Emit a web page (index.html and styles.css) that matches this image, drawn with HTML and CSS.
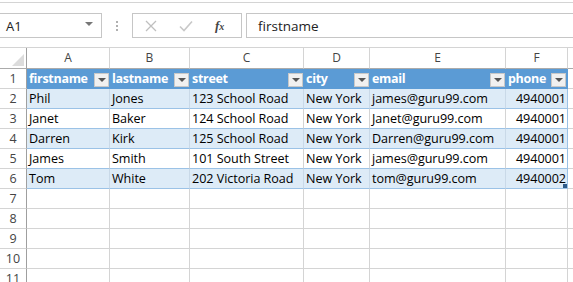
FILE: index.html
```html
<!DOCTYPE html>
<html>
<head>
<meta charset="utf-8">
<link rel="stylesheet" href="styles.css">
</head>
<body>
<div class="app">
  <div class="ribbon-edge"></div>
  <div class="formula-bar">
    <div class="namebox">
      <span class="namebox-text">A1</span>
      <span class="namebox-arrow"></span>
    </div>
    <div class="grip"><span></span><span></span><span></span></div>
    <div class="fx-buttons">
      <svg class="ico-x" width="12" height="12" viewBox="0 0 12 12"><path d="M1 1 L11 11 M11 1 L1 11" stroke="#bfbfbf" stroke-width="1.3" fill="none"/></svg>
      <svg class="ico-check" width="14" height="12" viewBox="0 0 14 12"><path d="M1 6.5 L5 10.5 L13 1.5" stroke="#c8c8c8" stroke-width="1.6" fill="none"/></svg>
      <span class="ico-fx"><i>f</i><i class="sub">x</i></span>
    </div>
    <div class="formula-input">firstname</div>
  </div>
  <div class="sheet">
    <div class="corner"><span class="corner-tri"></span></div>
    <div class="colhdr">A</div><div class="colhdr">B</div><div class="colhdr">C</div><div class="colhdr">D</div><div class="colhdr">E</div><div class="colhdr">F</div><div class="colhdr rest"></div>

    <div class="rowhdr">1</div>
    <div class="cell th">firstname<span class="dd"></span></div>
    <div class="cell th">lastname<span class="dd"></span></div>
    <div class="cell th">street<span class="dd"></span></div>
    <div class="cell th">city<span class="dd"></span></div>
    <div class="cell th">email<span class="dd"></span></div>
    <div class="cell th last">phone<span class="dd"></span></div>
    <div class="cell rest"></div>

    <div class="rowhdr">2</div>
    <div class="cell band">Phil</div><div class="cell band">Jones</div><div class="cell band">123 School Road</div><div class="cell band">New York</div><div class="cell band">james@guru99.com</div><div class="cell band num last">4940001</div><div class="cell rest"></div>

    <div class="rowhdr">3</div>
    <div class="cell plain">Janet</div><div class="cell plain">Baker</div><div class="cell plain">124 School Road</div><div class="cell plain">New York</div><div class="cell plain">Janet@guru99.com</div><div class="cell plain num last">4940001</div><div class="cell rest"></div>

    <div class="rowhdr">4</div>
    <div class="cell band">Darren</div><div class="cell band">Kirk</div><div class="cell band">125 School Road</div><div class="cell band">New York</div><div class="cell band">Darren@guru99.com</div><div class="cell band num last">4940001</div><div class="cell rest"></div>

    <div class="rowhdr">5</div>
    <div class="cell plain">James</div><div class="cell plain">Smith</div><div class="cell plain">101 South Street</div><div class="cell plain">New York</div><div class="cell plain">james@guru99.com</div><div class="cell plain num last">4940001</div><div class="cell rest"></div>

    <div class="rowhdr">6</div>
    <div class="cell band end">Tom</div><div class="cell band end">White</div><div class="cell band end">202 Victoria Road</div><div class="cell band end">New York</div><div class="cell band end">tom@guru99.com</div><div class="cell band end num last">4940002<span class="handle"></span></div><div class="cell rest"></div>

    <div class="rowhdr">7</div><div class="cell"></div><div class="cell"></div><div class="cell"></div><div class="cell"></div><div class="cell"></div><div class="cell"></div><div class="cell rest"></div>
    <div class="rowhdr">8</div><div class="cell"></div><div class="cell"></div><div class="cell"></div><div class="cell"></div><div class="cell"></div><div class="cell"></div><div class="cell rest"></div>
    <div class="rowhdr">9</div><div class="cell"></div><div class="cell"></div><div class="cell"></div><div class="cell"></div><div class="cell"></div><div class="cell"></div><div class="cell rest"></div>
    <div class="rowhdr">10</div><div class="cell"></div><div class="cell"></div><div class="cell"></div><div class="cell"></div><div class="cell"></div><div class="cell"></div><div class="cell rest"></div>
    <div class="rowhdr">11</div><div class="cell"></div><div class="cell"></div><div class="cell"></div><div class="cell"></div><div class="cell"></div><div class="cell"></div><div class="cell rest"></div>
  </div>
</div>
</body>
</html>
```
FILE: styles.css
```css
* { box-sizing: border-box; }
html, body { margin: 0; padding: 0; background: #fff; }
body { width: 573px; height: 282px; overflow: hidden; font-family: "Open Sans", "Noto Sans", sans-serif; }

.app { display: flex; flex-direction: column; }

.ribbon-edge { height: 3px; border-bottom: 1px solid #d4d4d4; margin-top: 0; }

.formula-bar {
  display: flex;
  align-items: stretch;
  height: 25px;
  margin-top: 10px;
}
.namebox {
  width: 102px;
  border: 1px solid #c6c6c6;
  border-left: none;
  display: flex;
  align-items: center;
  justify-content: space-between;
  padding: 0 8px 0 6px;
  font-size: 13px;
  color: #222;
}
.namebox-arrow {
  width: 0; height: 0;
  border-left: 4px solid transparent;
  border-right: 4px solid transparent;
  border-top: 4px solid #777;
  margin-top: -4px;
}
.grip {
  width: 30px;
  display: flex;
  flex-direction: column;
  align-items: center;
  justify-content: center;
  gap: 2px;
}
.grip span { width: 2px; height: 2px; background: #b0b0b0; }
.fx-buttons {
  width: 110px;
  border: 1px solid #c6c6c6;
  display: flex;
  align-items: center;
  padding-left: 12px;
}
.ico-x { margin-right: 22px; }
.ico-check { margin-right: 22px; margin-top: 1px; }
.ico-fx { font-family: "Liberation Serif", serif; font-size: 13px; color: #444; font-weight: bold; }
.ico-fx i.sub { font-size: 10px; }
.formula-input {
  flex: 1;
  margin-left: 4px;
  border: 1px solid #c6c6c6;
  border-right: none;
  padding-left: 11px;
  font-size: 13.5px;
  color: #222;
  display: flex;
  align-items: center;
}

.sheet {
  margin-top: 9px;
  display: grid;
  grid-template-columns: 27px 83px 80px 114px 66px 136px 62px 5px;
  grid-auto-rows: 20px;
  grid-template-rows: 21px;
  border-top: 1px solid #d4d4d4;
}
.corner {
  border-right: 1px solid #9f9f9f;
  border-bottom: 1px solid #ababab;
  position: relative;
}
.corner-tri {
  position: absolute;
  right: 2px; bottom: 2px;
  width: 0; height: 0;
  border-left: 12px solid transparent;
  border-bottom: 12px solid #dcdcdc;
}
.colhdr {
  border-right: 1px solid #d4d4d4;
  border-bottom: 1px solid #ababab;
  text-align: center;
  font-size: 12px;
  line-height: 20px;
  color: #444;
}
.colhdr.rest { border-right: none; }
.rowhdr {
  border-right: 1px solid #9f9f9f;
  border-bottom: 1px solid #d4d4d4;
  text-align: center;
  font-size: 12.5px;
  line-height: 19px;
  color: #444;
}
.cell {
  border-right: 1px solid #d4d4d4;
  border-bottom: 1px solid #d4d4d4;
  font-size: 12.6px;
  letter-spacing: -0.05px;
  line-height: 19px;
  padding-left: 2px;
  color: #000;
  white-space: nowrap;
  overflow: hidden;
  position: relative;
}
.cell.rest { border-right: none; }
.cell.th {
  background: #5b9bd5;
  color: #fff;
  font-weight: bold;
  font-size: 12.5px;
  letter-spacing: -0.3px;
  border-right: none;
  border-bottom: 1px solid #5b9bd5;
}
.cell.th.last { border-right: 1px solid #5b9bd5; }
.dd {
  position: absolute;
  right: 1px; top: 4px;
  width: 15px; height: 14px;
  background: #f0f0f0;
  border: 1px solid #c8c8c8;
}
.dd::after {
  content: "";
  position: absolute;
  left: 3px; top: 4px;
  border-left: 4px solid transparent;
  border-right: 4px solid transparent;
  border-top: 4px solid #555;
}
.cell.band {
  background: #ddebf7;
  border-right: 1px solid #c9d9e8;
  border-bottom: 1px solid #9bc2e6;
}
.cell.plain {
  background: #fff;
  border-bottom: 1px solid #9bc2e6;
}
.cell.last { border-right: 1px solid #9bc2e6; }
.cell.num { text-align: right; padding-right: 1px; }
.handle {
  position: absolute;
  right: 0; bottom: 0;
  width: 4px; height: 4px;
  background: #2e5c8a;
}
```
